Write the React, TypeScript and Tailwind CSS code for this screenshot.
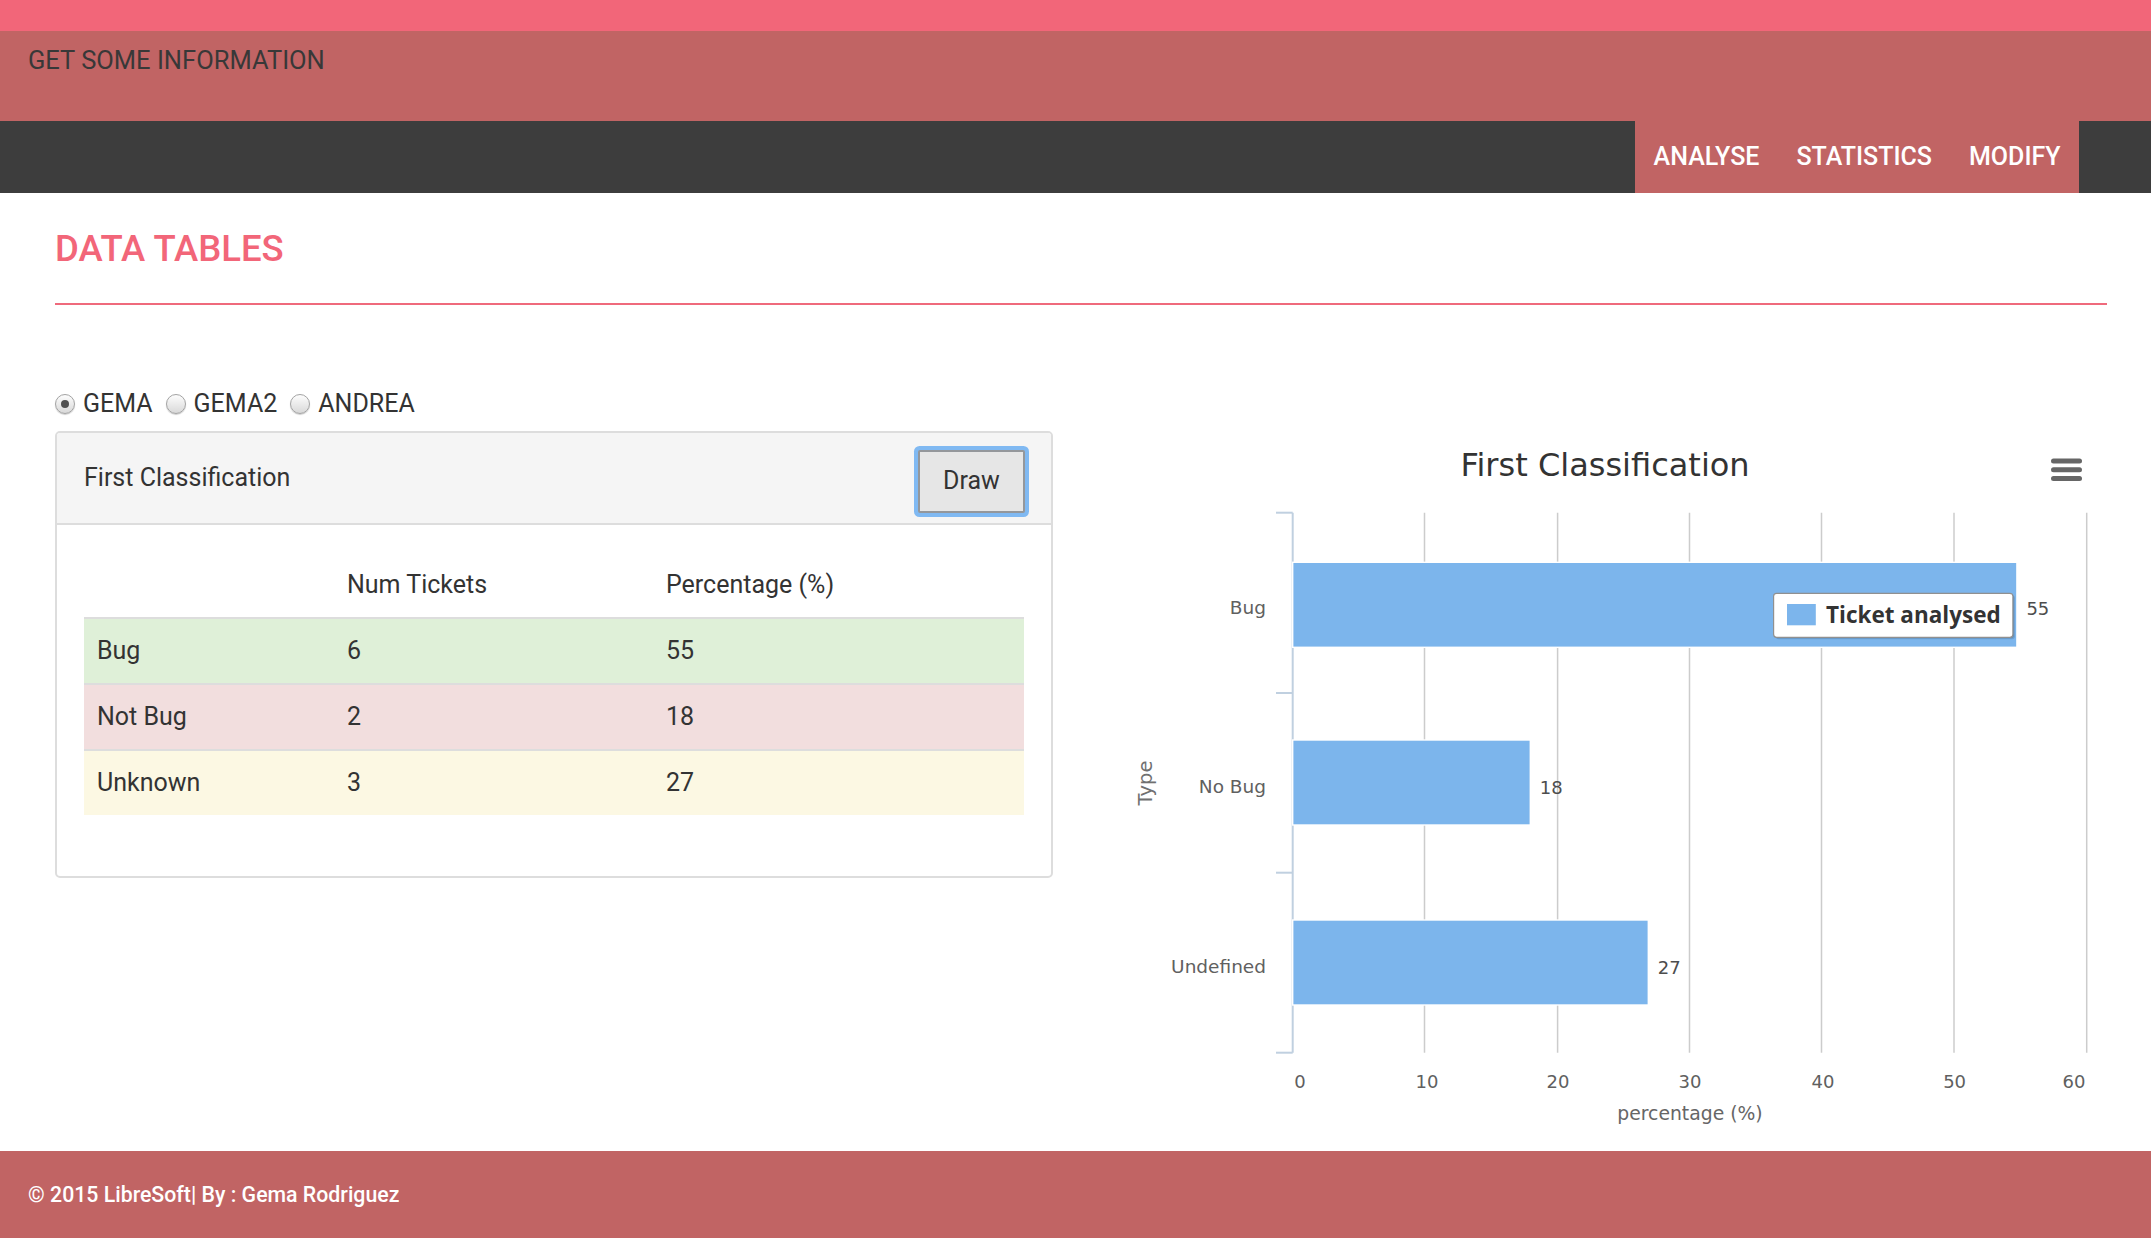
import { FC } from "react"

type Row = { label: string; num: number; pct: number; bg: string }

const rows: Row[] = [
  { label: "Bug", num: 6, pct: 55, bg: "bg-[#dff0d8]" },
  { label: "Not Bug", num: 2, pct: 18, bg: "bg-[#f2dede]" },
  { label: "Unknown", num: 3, pct: 27, bg: "bg-[#fcf8e3]" },
]

const Radio: FC<{ checked?: boolean; label: string }> = ({ checked, label }) => (
  <label className="flex items-center gap-[8px]">
    <span className="w-[20px] h-[20px] rounded-full border border-[#a3a3a3] bg-gradient-to-b from-[#fdfdfd] to-[#d9d9d9] shadow-[0_1px_1px_rgba(0,0,0,0.2)] flex items-center justify-center">
      {checked && <span className="w-[8px] h-[8px] rounded-full bg-[#505050]" />}
    </span>
    <span>{label}</span>
  </label>
)

// chart geometry, in svg units
const X0 = 211.7
const grid = [343.5, 476.6, 608.5, 740.5, 873, 1005.7]
const ticks = [122.7, 303, 482.7, 662.7]
const bars = [
  { label: "Bug", y: 172.3, w: 724.2, value: 55, ly: 224 },
  { label: "No Bug", y: 350, w: 237.6, value: 18, ly: 403.3 },
  { label: "Undefined", y: 530, w: 355.6, value: 27, ly: 583.3 },
]
const xLabels = [
  { t: "0", x: 219 },
  { t: "10", x: 346 },
  { t: "20", x: 477 },
  { t: "30", x: 609 },
  { t: "40", x: 742 },
  { t: "50", x: 873.6 },
  { t: "60", x: 993 },
]

const Chart: FC = () => (
  <svg className="block" width={1026} height={750} viewBox="0 0 1026 750" fontFamily="'DejaVu Sans', sans-serif">
    <text x={524} y={86} textAnchor="middle" fontSize={32} fill="#333333">
      First Classification
    </text>

    {/* context menu */}
    <rect x={970} y={68.5} width={31} height={5} rx={2.5} fill="#666" />
    <rect x={970} y={77.3} width={31} height={5} rx={2.5} fill="#666" />
    <rect x={970} y={86} width={31} height={5} rx={2.5} fill="#666" />

    {grid.map((x) => (
      <line key={x} x1={x} x2={x} y1={122.7} y2={662.7} stroke="#cccccc" strokeWidth={1.5} />
    ))}

    <line x1={X0} x2={X0} y1={122.7} y2={662.7} stroke="#c0d0e0" strokeWidth={2} />
    {ticks.map((y) => (
      <line key={y} x1={195} x2={X0} y1={y} y2={y} stroke="#c0d0e0" strokeWidth={2} />
    ))}

    {bars.map((b) => (
      <g key={b.label}>
        <rect x={X0} y={b.y} width={b.w} height={85} fill="#7cb5ec" stroke="#ffffff" strokeWidth={1.4} />
        <text x={185} y={b.ly} textAnchor="end" fontSize={18.5} fill="#606060">
          {b.label}
        </text>
        <text x={X0 + b.w + 9.5} y={b.ly + 1} fontSize={18} fill="#4d4d4d">
          {b.value}
        </text>
      </g>
    ))}

    <text
      x={64}
      y={400}
      transform="rotate(-90 64 393)"
      textAnchor="middle"
      fontSize={19.5}
      fill="#707070"
    >
      Type
    </text>

    {xLabels.map((l) => (
      <text key={l.t} x={l.x} y={698.3} textAnchor="middle" fontSize={18} fill="#606060">
        {l.t}
      </text>
    ))}
    <text x={609} y={729.5} textAnchor="middle" fontSize={18.8} fill="#666666">
      percentage (%)
    </text>

    {/* legend */}
    <rect x={694.6} y={205.3} width={239.3} height={44} rx={3} fill="rgba(0,0,0,0.12)" />
    <rect x={693.6} y={204.3} width={239.3} height={44} rx={3} fill="rgba(0,0,0,0.12)" />
    <rect x={692.6} y={203.3} width={239.3} height={44} rx={3} fill="#ffffff" stroke="#909090" strokeWidth={1.2} />
    <rect x={706} y={214} width={28.8} height={21.3} fill="#7cb5ec" />
    <text x={745} y={233.3} fontSize={22.5} fontWeight={700} fontFamily="'Open Sans', sans-serif" fill="#333333">
      Ticket analysed
    </text>
  </svg>
)

const App: FC = () => {
  return (
    <div className="min-h-screen flex flex-col bg-white font-['Roboto',sans-serif] text-[#333]">
      {/* Top strip */}
      <div className="h-[31px] bg-[#f26679]" />

      {/* Header */}
      <div className="h-[90px] bg-[#c16464] pl-[28px] pt-[14px]">
        <p className="text-[25.5px] leading-[30px] text-[#383838]">GET SOME INFORMATION</p>
      </div>

      {/* Nav */}
      <div className="h-[72px] bg-[#3d3d3d] flex justify-end pr-[72px]">
        <div className="bg-[#c16464] flex items-center">
          {["ANALYSE", "STATISTICS", "MODIFY"].map((item) => (
            <span key={item} className="px-[18.5px] text-[25px] leading-[30px] font-medium text-white cursor-pointer">
              {item}
            </span>
          ))}
        </div>
      </div>

      {/* Main */}
      <div className="flex-1 pl-[55px] pr-[44px] pt-[34px]">
        <div className="pb-[32px] border-b-2 border-[#ef6a7c]">
          <h1 className="text-[36.5px] leading-[44px] font-medium text-[#f26679]">DATA TABLES</h1>
        </div>

        <div className="mt-[85px] flex gap-[28px]">
          {/* Left column */}
          <div className="w-[998px]">
            <div className="flex items-center gap-[13px] text-[25px] leading-[28px]">
              <Radio checked label="GEMA" />
              <Radio label="GEMA2" />
              <Radio label="ANDREA" />
            </div>

            <div className="mt-[13px] border-2 border-[#dddddd] rounded-[5px] overflow-hidden">
              <div className="h-[92px] pt-[6px] bg-[#f5f5f5] border-b-2 border-[#dddddd] flex items-center justify-between pl-[27px] pr-[26px]">
                <span className="text-[25px] leading-[30px] mb-[6px]">First Classification</span>
                <button className="w-[107px] h-[63px] border-2 border-[#94979b] bg-[#e6e6e6] rounded-[2px] shadow-[0_0_0_4px_#80b9f2] text-[25px] leading-[30px] text-[#333]">
                  Draw
                </button>
              </div>

              <div className="pt-[28px] pb-[61px] px-[27px] text-[25px] leading-[30px]">
                <div className="grid grid-cols-[249px_319px_1fr] pt-[17px] pb-[17px] border-b-2 border-[#dddddd]">
                  <span />
                  <span className="pl-[14px]">Num Tickets</span>
                  <span className="pl-[14px]">Percentage (%)</span>
                </div>
                {rows.map((r, i) => (
                  <div
                    key={r.label}
                    className={`grid grid-cols-[249px_319px_1fr] items-center ${r.bg} ${
                      i < rows.length - 1 ? "h-[66px] border-b-2 border-[#dddddd]" : "h-[64px]"
                    }`}
                  >
                    <span className="pl-[13px]">{r.label}</span>
                    <span className="pl-[14px]">{r.num}</span>
                    <span className="pl-[14px]">{r.pct}</span>
                  </div>
                ))}
              </div>
            </div>
          </div>

          {/* Right column */}
          <div className="w-[1026px]">
            <Chart />
          </div>
        </div>
      </div>

      {/* Footer */}
      <div className="h-[87px] bg-[#c16464] flex items-center pl-[28px]">
        <p className="text-[21.3px] leading-[26px] font-medium text-white">© 2015 LibreSoft| By : Gema Rodriguez</p>
      </div>
    </div>
  )
}

export default App
